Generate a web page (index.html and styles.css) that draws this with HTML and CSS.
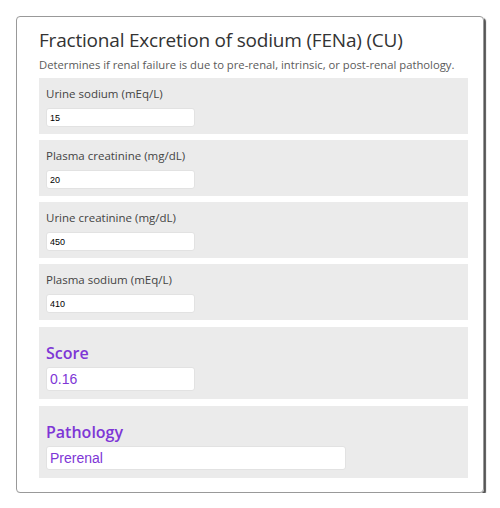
FILE: index.html
```html
<!DOCTYPE html>
<html>
<head>
<meta charset="utf-8">
<link rel="stylesheet" href="styles.css">
</head>
<body>
<div class="card">
  <h1 class="title">Fractional Excretion of sodium (FENa) (CU)</h1>
  <p class="desc">Determines if renal failure is due to pre-renal, intrinsic, or post-renal pathology.</p>
  <div class="panels">
    <div class="panel">
      <label class="label">Urine sodium (mEq/L)</label>
      <input class="field" type="text" value="15">
    </div>
    <div class="panel">
      <label class="label">Plasma creatinine (mg/dL)</label>
      <input class="field" type="text" value="20">
    </div>
    <div class="panel">
      <label class="label">Urine creatinine (mg/dL)</label>
      <input class="field" type="text" value="450">
    </div>
    <div class="panel">
      <label class="label">Plasma sodium (mEq/L)</label>
      <input class="field" type="text" value="410">
    </div>
    <div class="panel result">
      <label class="rlabel">Score</label>
      <input class="rfield" type="text" value="0.16">
    </div>
    <div class="panel result">
      <label class="rlabel">Pathology</label>
      <input class="rfield wide" type="text" value="Prerenal">
    </div>
  </div>
</div>
</body>
</html>
```
FILE: styles.css
```css
html, body {
  margin: 0;
  padding: 0;
  background: #fff;
}
body {
  font-family: "Open Sans", sans-serif;
}
.card {
  box-sizing: border-box;
  margin: 16px 0 0 16px;
  width: 468px;
  height: 477px;
  border: 1px solid #999;
  border-radius: 4px;
  box-shadow: 2px 2px 1px #555;
  padding: 11px 15px 0 22px;
}
.title {
  margin: 0;
  font-size: 19px;
  letter-spacing: -0.2px;
  font-weight: 400;
  line-height: 24px;
  color: #333;
}
.desc {
  margin: 5px 0 0;
  font-size: 11.25px;
  line-height: 16px;
  color: #5a5a5a;
}
.panels {
  margin-top: 5px;
  display: flex;
  flex-direction: column;
  gap: 6px;
}
.panel {
  background: #ebebeb;
  padding: 7px;
  display: flex;
  flex-direction: column;
  align-items: flex-start;
}
.label {
  font-size: 11.5px;
  line-height: 18px;
  color: #444;
  margin-bottom: 5px;
}
.field {
  box-sizing: border-box;
  width: 149px;
  height: 19px;
  border: 1px solid #e2e2e2;
  border-radius: 3px;
  background: #fff;
  padding: 0 3px;
  font-family: "Liberation Sans", Arial, sans-serif;
  font-size: 9px;
  color: #000;
  outline: none;
}
.result {
  margin-top: 1px;
  padding-top: 16px;
  padding-bottom: 8px;
}
.rlabel {
  font-size: 16px;
  font-weight: 600;
  line-height: 20px;
  color: #7e36d6;
  margin-bottom: 4px;
}
.rfield {
  box-sizing: border-box;
  width: 149px;
  height: 24px;
  border: 1px solid #e2e2e2;
  border-radius: 3px;
  background: #fff;
  padding: 0 3px;
  font-family: "Liberation Sans", Arial, sans-serif;
  font-size: 14px;
  color: #7e36d6;
  outline: none;
}
.wide {
  width: 300px;
}
```
